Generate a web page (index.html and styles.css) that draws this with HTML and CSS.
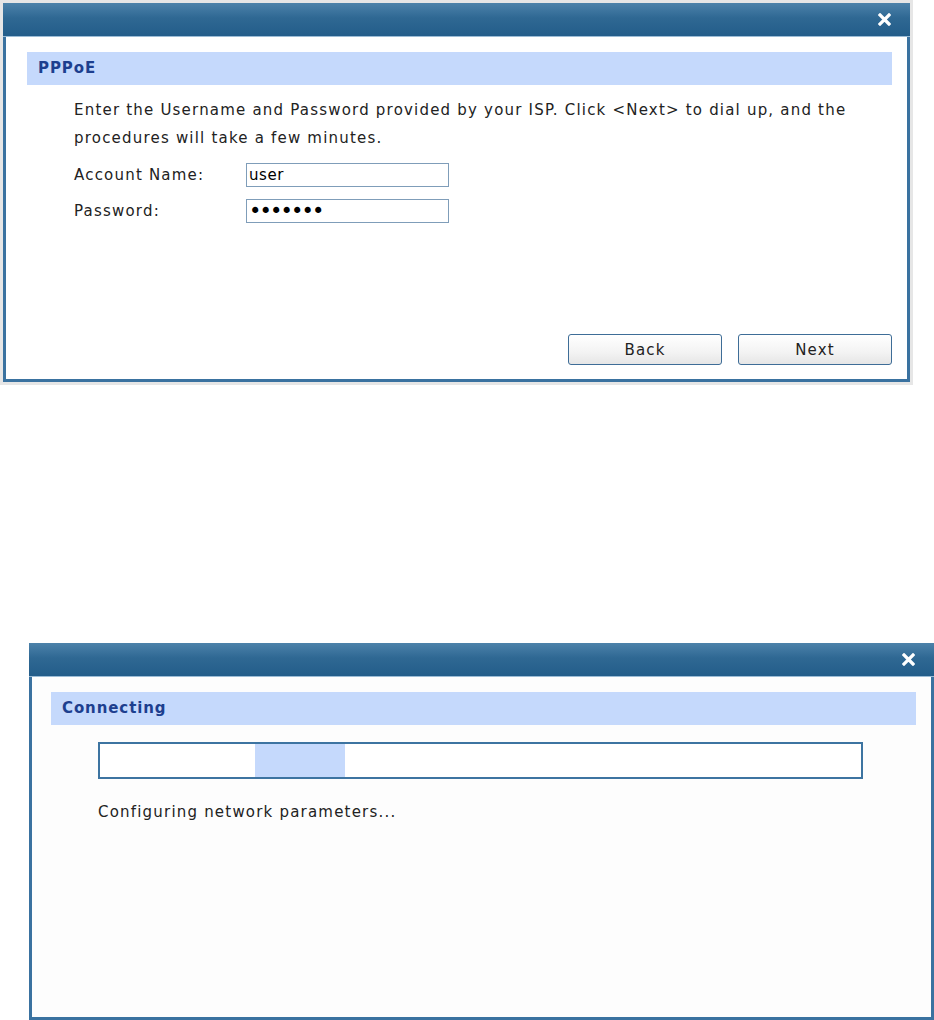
FILE: index.html
```html
<!DOCTYPE html>
<html lang="en">
<head>
    <meta charset="UTF-8">
    <title>PPPoE Setup</title>
    <link rel="stylesheet" href="styles.css">
</head>
<body>

    <!-- PPPoE dialog -->
    <div class="dialog dialog-pppoe">
        <div class="dialog-title">
            <svg class="close-btn" width="13" height="13" viewBox="0 0 13 13">
                <path d="M2 2 L11 11 M11 2 L2 11" stroke="#ffffff" stroke-width="3.2" stroke-linecap="square"/>
            </svg>
        </div>
        <div class="dialog-body">
            <div class="section-head">PPPoE</div>
            <div class="section-content">
                <p class="intro">Enter the Username and Password provided by your ISP. Click &lt;Next&gt; to dial up, and the procedures will take a few minutes.</p>
                <div class="form-grid">
                    <label for="account">Account Name:</label>
                    <input type="text" id="account" value="user">
                    <label for="password">Password:</label>
                    <input type="password" id="password" class="pass-input" value="1234567">
                </div>
            </div>
            <div class="dialog-buttons">
                <button class="btn">Back</button>
                <button class="btn">Next</button>
            </div>
        </div>
    </div>

    <!-- Connecting dialog -->
    <div class="dialog dialog-connecting">
        <div class="dialog-title">
            <svg class="close-btn" width="13" height="13" viewBox="0 0 13 13">
                <path d="M2 2 L11 11 M11 2 L2 11" stroke="#ffffff" stroke-width="3.2" stroke-linecap="square"/>
            </svg>
        </div>
        <div class="dialog-body">
            <div class="section-head">Connecting</div>
            <div class="section-content">
                <div class="progress">
                    <div class="progress-fill" style="margin-left: 155px; width: 90px;"></div>
                </div>
                <p class="status">Configuring network parameters...</p>
            </div>
        </div>
    </div>

</body>
</html>
```

FILE: styles.css
```css
/* Reset */
* {
    margin: 0;
    padding: 0;
    box-sizing: border-box;
}

html, body {
    background: #ffffff;
    overflow: hidden;
}

body {
    padding: 3px 0 0 3px;
    font-family: "DejaVu Sans", Verdana, sans-serif;
    font-size: 15px;
    letter-spacing: 1.2px;
    color: #222222;
}

/* Dialog frame */
.dialog {
    display: flex;
    flex-direction: column;
    border: 3px solid #3a72a0;
    border-top: none;
}

.dialog-pppoe {
    width: 907px;
    height: 379px;
    background: #ffffff;
    box-shadow: 0 0 0 3px #e6e6e6;
}

.dialog-connecting {
    width: 905px;
    height: 377px;
    margin-top: 261px;
    margin-left: 26px;
    background: #fdfdfd;
}

.dialog-title {
    height: 34px;
    margin: 0 -3px;
    display: flex;
    justify-content: flex-end;
    align-items: center;
    padding-right: 19px;
    background: linear-gradient(to bottom, #4c82aa, #2f6893 45%, #235d8a);
    border-bottom: 1px solid #9bbcd6;
}

.close-btn {
    display: block;
    cursor: pointer;
}

.dialog-body {
    flex: 1;
    display: flex;
    flex-direction: column;
    padding: 15px 15px 14px 21px;
}

.dialog-connecting .dialog-body {
    padding-left: 19px;
}

/* Section header bar */
.section-head {
    height: 33px;
    line-height: 33px;
    padding-left: 11px;
    background: #c5d9fc;
    color: #1d3f8f;
    font-weight: bold;
    letter-spacing: 0.9px;
}

.section-content {
    padding-left: 47px;
}

.intro {
    margin-top: 11px;
    line-height: 28px;
    padding-right: 20px;
}

/* Form */
.form-grid {
    display: grid;
    grid-template-columns: 172px 203px;
    grid-auto-rows: 24px;
    row-gap: 12px;
    align-items: center;
    margin-top: 11px;
}

.form-grid input {
    height: 24px;
    border: 1px solid #7f9db9;
    padding: 0 2px;
    font-family: "DejaVu Sans", Verdana, sans-serif;
    font-size: 15px;
    letter-spacing: 0.6px;
    color: #000000;
    background: #ffffff;
    outline: none;
}

.form-grid .pass-input {
    font-size: 21px;
    letter-spacing: -1.9px;
}

.dialog-buttons {
    margin-top: auto;
    display: flex;
    justify-content: flex-end;
    gap: 16px;
}

.btn {
    width: 154px;
    height: 31px;
    border: 1px solid #3e6d97;
    border-radius: 3px;
    background: linear-gradient(to bottom, #ffffff, #f3f3f3 60%, #e6e6e6);
    font-family: "DejaVu Sans", Verdana, sans-serif;
    font-size: 15px;
    letter-spacing: 1.2px;
    color: #222222;
    cursor: pointer;
}

/* Progress */
.progress {
    margin-top: 17px;
    width: 765px;
    height: 37px;
    border: 2px solid #3d74a1;
    background: #ffffff;
    display: flex;
}

.progress-fill {
    background: #c5d9fc;
}

.status {
    margin-top: 19px;
    line-height: 28px;
}
```
